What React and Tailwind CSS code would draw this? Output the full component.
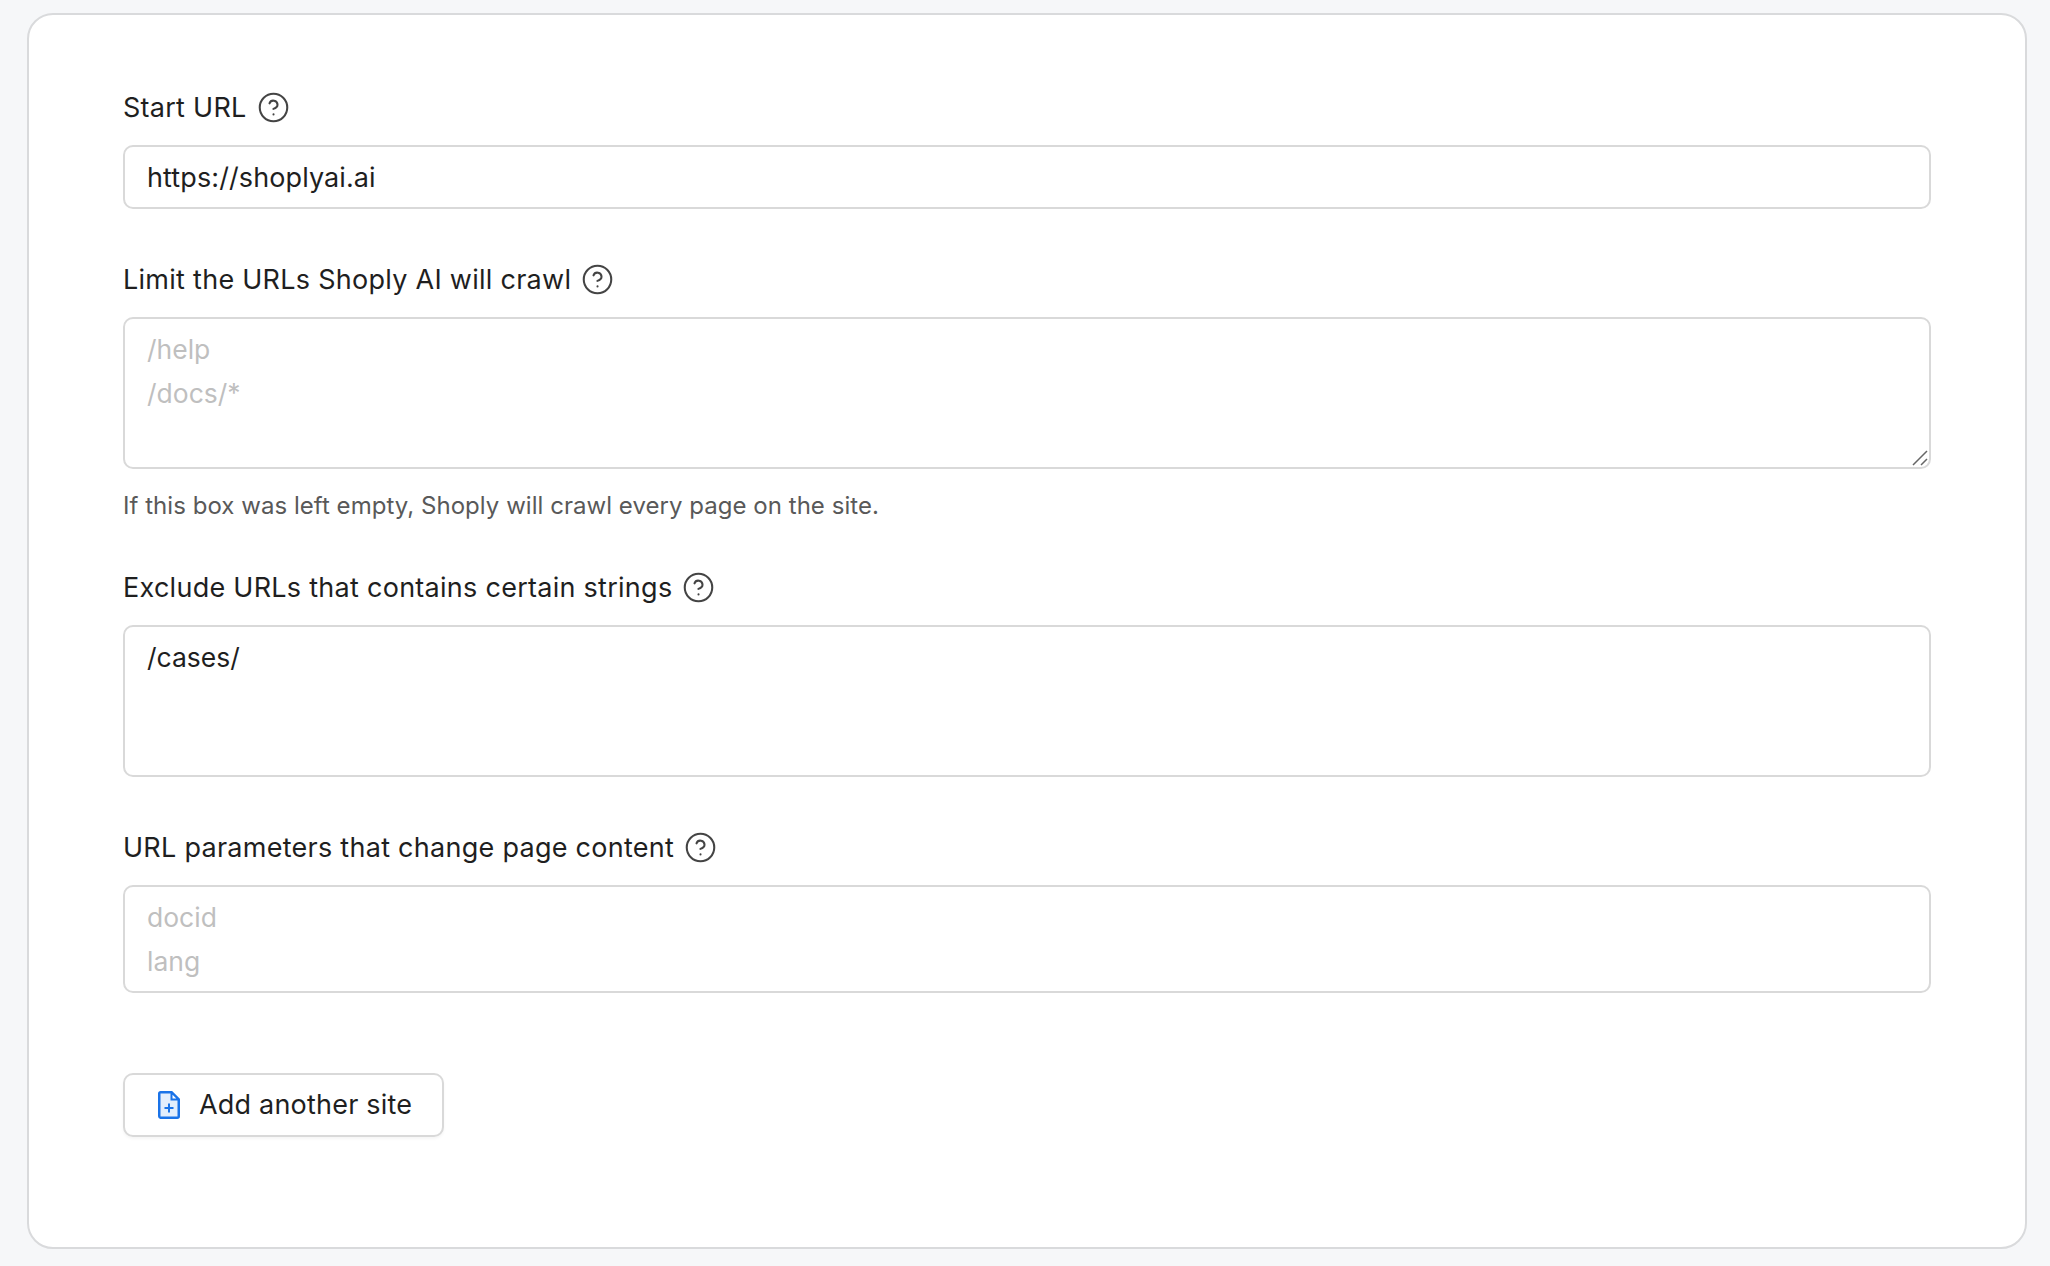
import { CircleHelp } from 'lucide-react';

const fieldClass = 'block w-full rounded-[10px] border-2 border-[#d9d9d9] bg-white px-[22px] leading-[44px] text-[#1f1f1f] placeholder:text-[#bfbfbf] outline-none';

function Label({ children }) {
  return (
    <div className="flex h-9 items-center gap-[10px] text-[27px] leading-[36px] tracking-[0.27px] text-[#1f1f1f]">
      <span className="pt-px">{children}</span>
      <CircleHelp className="h-[33px] w-[33px] text-[#444444]" strokeWidth={1.5} />
    </div>
  );
}

export default function App() {
  return (
    <div className="min-h-[1266px] bg-[#f6f7f9] pt-[13px] pl-[27px] pr-[23px] [font-family:Inter,sans-serif]">
      <div className="h-[1236px] rounded-[26px] border-2 border-[#d9dadc] bg-white pt-[74px] pl-[94px] pr-[94px]">
        <Label>Start URL</Label>
        <input className={`${fieldClass} mt-5 h-[64px] text-[27px] tracking-[0.1px]`} defaultValue="https://shoplyai.ai" />

        <div className="mt-[52px]">
          <Label>Limit the URLs Shoply AI will crawl</Label>
        </div>
        <div className="relative mt-5">
          <textarea
            className={`${fieldClass} h-[152px] resize-none py-2 text-[26.5px]`}
            placeholder={'/help\n/docs/*'}
          />
          <svg viewBox="0 0 16 16" className="absolute right-[3px] bottom-[3px] h-4 w-4" fill="none" stroke="#666666" strokeWidth="1.5">
            <path d="M1 15 15 1M9 15l6-6" />
          </svg>
        </div>
        <p className="mt-[21px] text-[24px] leading-[32px] tracking-[0.04px] text-[#595959]">If this box was left empty, Shoply will crawl every page on the site.</p>

        <div className="mt-[47px]">
          <Label>Exclude URLs that contains certain strings</Label>
        </div>
        <textarea className={`${fieldClass} mt-5 h-[152px] resize-none py-2 text-[26.5px]`} defaultValue="/cases/" />

        <div className="mt-[52px]">
          <Label>URL parameters that change page content</Label>
        </div>
        <textarea
          className={`${fieldClass} mt-5 h-[108px] resize-none py-2 text-[26.5px]`}
          placeholder={'docid\nlang'}
        />

        <button className="mt-[80px] flex h-[64px] w-[321px] items-center gap-[19px] rounded-[10px] border-2 border-[#d9d9d9] bg-white pl-[33px] text-[27px] tracking-[0.2px] text-[#1f1f1f] shadow-[0_2px_3px_rgba(0,0,0,0.04)]">
          <svg viewBox="0 0 22 28" className="h-7 w-[22px]" fill="none">
            <path d="M2.5 1.25h11L20.75 8.5V25.25a1.5 1.5 0 0 1-1.5 1.5H2.5A1.5 1.5 0 0 1 1.25 25.25V2.5A1.25 1.25 0 0 1 2.5 1.25Z" fill="#e3eefc" stroke="#1a73e8" strokeWidth="2.5" />
            <path d="M13.5 1.25V8.5H20.75Z" fill="#ffffff" stroke="#1a73e8" strokeWidth="2" />
            <path d="M11 12.5v9M6.5 17h9" stroke="#1a73e8" strokeWidth="2" />
          </svg>
          <span className="pt-px">Add another site</span>
        </button>
      </div>
    </div>
  );
}
